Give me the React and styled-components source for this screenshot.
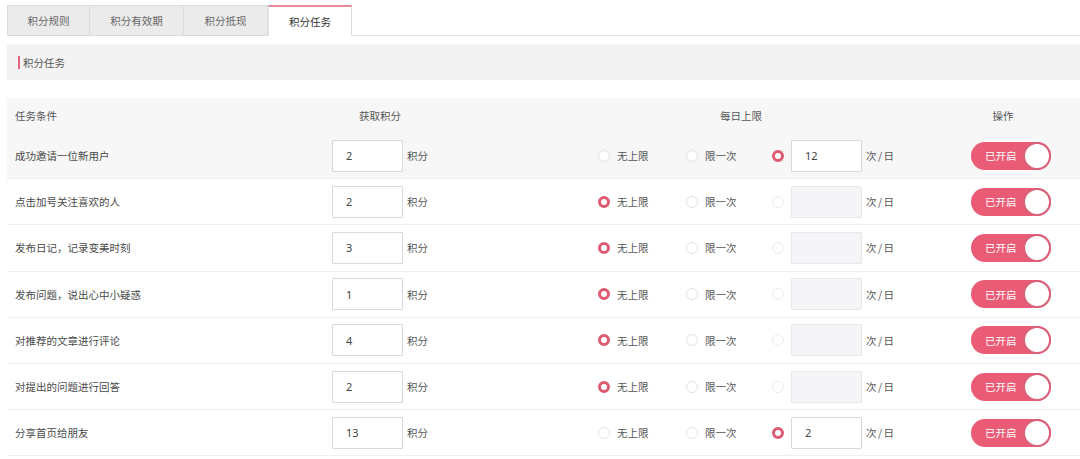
import React, { useState } from "react";
import styled, { createGlobalStyle } from "styled-components";

const GlobalStyle = createGlobalStyle`
  body {
    margin: 0;
    background: #fff;
    font-family: "Noto Sans CJK SC", "Noto Sans", sans-serif;
    color: #555;
  }
`;

const tabs = ["积分规则", "积分有效期", "积分抵现", "积分任务"];
const tabWidths = [83, 94, 84, 84];

const tasks = [
  { name: "成功邀请一位新用户", points: "2", limit: "custom", times: "12" },
  { name: "点击加号关注喜欢的人", points: "2", limit: "none", times: "" },
  { name: "发布日记，记录变美时刻", points: "3", limit: "none", times: "" },
  { name: "发布问题，说出心中小疑惑", points: "1", limit: "none", times: "" },
  { name: "对推荐的文章进行评论", points: "4", limit: "none", times: "" },
  { name: "对提出的问题进行回答", points: "2", limit: "none", times: "" },
  { name: "分享首页给朋友", points: "13", limit: "custom", times: "2" },
];

const App = () => {
  const [active, setActive] = useState(3);
  const [rows, setRows] = useState(tasks.map((t) => ({ ...t, on: true })));

  const update = (i, patch) =>
    setRows((prev) => prev.map((r, j) => (j === i ? { ...r, ...patch } : r)));

  return (
    <Page>
      <GlobalStyle />
      <TabBar>
        {tabs.map((t, i) => (
          <Tab
            key={t}
            $width={tabWidths[i]}
            $active={active === i}
            onClick={() => setActive(i)}
          >
            {t}
          </Tab>
        ))}
      </TabBar>

      <SectionHead>
        <Marker />
        积分任务
      </SectionHead>

      <Table>
        <HeadRow>
          <Cell $col={1} $pad={8}>任务条件</Cell>
          <Cell $col={2} $center>获取积分</Cell>
          <Cell $col={4} $center>每日上限</Cell>
          <Cell $col={6} $center>操作</Cell>
        </HeadRow>
        {rows.map((r, i) => (
          <Row key={r.name} $hover={i === 0}>
            <Cell $col={1} $pad={8}>{r.name}</Cell>
            <Cell $col={2} $pad={32}>
              <NumInput
                value={r.points}
                onChange={(e) => update(i, { points: e.target.value })}
              />
              <Unit>积分</Unit>
            </Cell>
            <Cell $col={4} $pad={18}>
              <Option $width={88} onClick={() => update(i, { limit: "none" })}>
                <Radio $checked={r.limit === "none"} />
                <OptLabel>无上限</OptLabel>
              </Option>
              <Option $width={86} onClick={() => update(i, { limit: "once" })}>
                <Radio $checked={r.limit === "once"} />
                <OptLabel>限一次</OptLabel>
              </Option>
              <Option onClick={() => update(i, { limit: "custom" })}>
                <Radio
                  $checked={r.limit === "custom"}
                  $faded={r.limit !== "custom"}
                />
              </Option>
              <NumInput
                value={r.limit === "custom" ? r.times : ""}
                disabled={r.limit !== "custom"}
                onChange={(e) => update(i, { times: e.target.value })}
              />
              <Unit $spaced>次/日</Unit>
            </Cell>
            <Cell $col={6} $pad={45}>
              <Switch $on={r.on} onClick={() => update(i, { on: !r.on })}>
                <SwitchText>{r.on ? "已开启" : "已关闭"}</SwitchText>
                <Knob />
              </Switch>
            </Cell>
          </Row>
        ))}
      </Table>
    </Page>
  );
};

export default App;

const Page = styled.div`
  padding: 5px 0 0 7px;
  width: 1080px;
  box-sizing: border-box;
  overflow: hidden;
`;

const TabBar = styled.div`
  display: flex;
  height: 30px;
  border-bottom: 1px solid #e2e2e2;
`;

const Tab = styled.div`
  width: ${(p) => p.$width}px;
  box-sizing: border-box;
  display: flex;
  align-items: center;
  justify-content: center;
  font-size: 10.5px;
  cursor: pointer;
  color: ${(p) => (p.$active ? "#333" : "#666")};
  background: ${(p) => (p.$active ? "#fff" : "#ebebeb")};
  border: 1px solid #dcdcdc;
  border-left: ${(p) => (p.$active ? "1px solid #e5e5e5" : "none")};
  border-top: ${(p) => (p.$active ? "2px solid #e58a9b" : "1px solid #dcdcdc")};
  border-bottom: ${(p) => (p.$active ? "1px solid #fff" : "1px solid #dcdcdc")};
  margin-bottom: -1px;

  &:first-child {
    border-left: 1px solid #dcdcdc;
  }
`;

const SectionHead = styled.div`
  margin-top: 8px;
  height: 36px;
  background: #f3f3f3;
  display: flex;
  align-items: center;
  padding-left: 11px;
  font-size: 10.5px;
  color: #555;
`;

const Marker = styled.span`
  width: 2px;
  height: 13px;
  background: #e0677f;
  margin-right: 3px;
`;

const Table = styled.div`
  margin-top: 18px;
`;

const HeadRow = styled.div`
  display: grid;
  grid-template-columns: 293px 160px 120px 322px 24px 154px;
  height: 35px;
  background: #f7f7f8;
  font-size: 10.5px;
  color: #555;
`;

const Row = styled.div`
  display: grid;
  grid-template-columns: 293px 160px 120px 322px 24px 154px;
  height: 45.2px;
  border-bottom: 1px solid #efefef;
  background: ${(p) => (p.$hover ? "#f7f7f8" : "#fff")};
  font-size: 10.5px;
  color: #4a4a4a;
`;

const Cell = styled.div`
  grid-column: ${(p) => p.$col};
  display: flex;
  align-items: center;
  justify-content: ${(p) => (p.$center ? "center" : "flex-start")};
  padding-left: ${(p) => p.$pad || 0}px;
  white-space: nowrap;
`;

const NumInput = styled.input`
  width: 71px;
  height: 32px;
  box-sizing: border-box;
  border: 1px solid #d9d9d9;
  border-radius: 1px;
  padding: 0 13px;
  font-family: "Noto Sans", sans-serif;
  font-size: 11px;
  color: #444;
  background: #fff;
  outline: none;

  &:disabled {
    background: #f5f5f7;
    border-color: #e8e8ea;
  }
`;

const Unit = styled.span`
  margin-left: 4px;
  color: #555;
  letter-spacing: ${(p) => (p.$spaced ? "1.5px" : "0")};
`;

const Option = styled.label`
  display: flex;
  align-items: center;
  width: ${(p) => (p.$width ? `${p.$width}px` : "auto")};
  margin-right: ${(p) => (p.$width ? 0 : 7)}px;
  cursor: pointer;
`;

const Radio = styled.span`
  width: 12px;
  height: 12px;
  box-sizing: border-box;
  border-radius: 50%;
  background: #fff;
  border: ${(p) =>
    p.$checked ? "3.5px solid #dc5a72" : `1px solid ${p.$faded ? "#ececec" : "#e1e1e1"}`};
`;

const OptLabel = styled.span`
  margin-left: 7px;
  color: #555;
`;

const Switch = styled.div`
  width: 80px;
  height: 28px;
  border-radius: 14px;
  background: ${(p) => (p.$on ? "#ea5c76" : "#ccc")};
  display: flex;
  align-items: center;
  justify-content: space-between;
  padding: 0 0 0 14px;
  box-sizing: border-box;
  cursor: pointer;
`;

const SwitchText = styled.span`
  color: #fff;
  font-size: 10.5px;
`;

const Knob = styled.span`
  width: 28px;
  height: 28px;
  box-sizing: border-box;
  border-radius: 50%;
  background: #fff;
  border: 2px solid #d9627a;
`;
